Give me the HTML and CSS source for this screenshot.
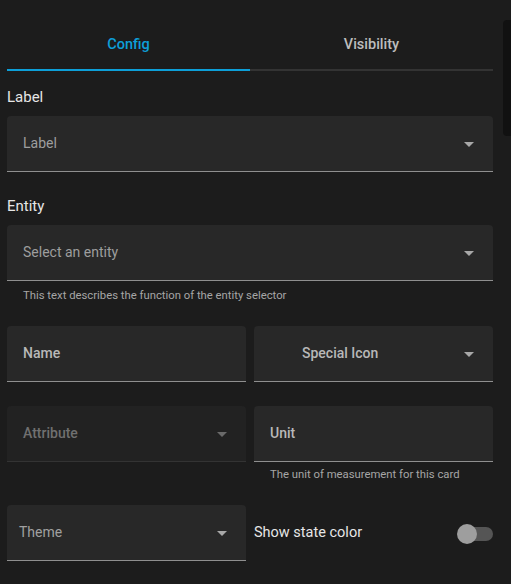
FILE: index.html
```html
<!DOCTYPE html>
<html>
<head>
<meta charset="utf-8">
<link rel="stylesheet" href="styles.css">
</head>
<body>
<div class="page">
  <div class="editor">
    <div class="tabs">
      <div class="tab active">Config</div>
      <div class="tab">Visibility</div>
    </div>

    <div class="section-title">Label</div>
    <div class="field">
      <span class="field-text">Label</span>
      <span class="arrow"></span>
    </div>

    <div class="section-title entity-title">Entity</div>
    <div class="field">
      <span class="field-text">Select an entity</span>
      <span class="arrow"></span>
    </div>
    <div class="helper">This text describes the function of the entity selector</div>

    <div class="grid">
      <div class="cell">
        <div class="field">
          <span class="field-text medium">Name</span>
        </div>
      </div>
      <div class="cell">
        <div class="field">
          <span class="field-text medium special">Special Icon</span>
          <span class="arrow"></span>
        </div>
      </div>
      <div class="cell">
        <div class="field disabled">
          <span class="field-text medium">Attribute</span>
          <span class="arrow"></span>
        </div>
      </div>
      <div class="cell">
        <div class="field">
          <span class="field-text medium">Unit</span>
        </div>
        <div class="helper helper-tight">The unit of measurement for this card</div>
      </div>
      <div class="cell last-row">
        <div class="field theme">
          <span class="field-text">Theme</span>
          <span class="arrow"></span>
        </div>
      </div>
      <div class="cell toggle-cell last-row">
        <span class="toggle-label">Show state color</span>
        <span class="switch"><span class="knob"></span></span>
      </div>
    </div>
  </div>
  <div class="scrollbar"><div class="thumb"></div></div>
</div>
</body>
</html>
```
FILE: styles.css
```css
* { box-sizing: border-box; }
html, body {
  margin: 0;
  padding: 0;
  background: #1c1c1c;
  font-family: Roboto, "Liberation Sans", sans-serif;
  color: #e1e1e1;
}
.page {
  display: flex;
  width: 511px;
  height: 584px;
  overflow: hidden;
}
.editor {
  width: 486px;
  margin-left: 7px;
  padding-top: 20px;
}
.scrollbar {
  margin-left: 10px;
  padding-top: 20px;
  width: 8px;
}
.thumb {
  width: 8px;
  height: 116px;
  background: #111111;
  border-radius: 4px 0 0 4px;
}
.tabs {
  display: flex;
  height: 51px;
  border-bottom: 2px solid #333333;
}
.tab {
  flex: 1;
  display: flex;
  align-items: center;
  justify-content: center;
  font-size: 14.5px;
  font-weight: 500;
  color: #bdbdbd;
  margin-bottom: -2px;
  border-bottom: 2px solid transparent;
}
.tab.active {
  color: #0d9fd8;
  border-bottom-color: #0d9fd8;
}
.section-title {
  font-size: 15px;
  height: 45px;
  display: flex;
  align-items: center;
  padding-top: 6px;
  color: #e6e6e6;
}
.entity-title {
  margin-top: 15px;
  height: 38px;
  padding-top: 0;
}
.field {
  height: 56px;
  background: #282828;
  border-radius: 4px 4px 0 0;
  border-bottom: 1px solid #8f8f8f;
  display: flex;
  align-items: center;
  padding: 0 16px 1px;
}
.field-text {
  flex: 1;
  font-size: 14px;
  color: #9e9e9e;
}
.field-text.medium {
  font-weight: 500;
  font-size: 14px;
  color: #b8b8b8;
}
.field-text.special {
  padding-left: 32px;
}
.field.disabled {
  background: #222222;
  border-bottom-color: #333333;
}
.field.disabled .field-text { color: #707070; }
.field.disabled .arrow { border-top-color: #6a6a6a; }
.field.theme { padding-left: 12px; }
.field.theme .field-text { font-weight: 400; color: #a0a0a0; }
.arrow {
  width: 0;
  height: 0;
  border-left: 5px solid transparent;
  border-right: 5px solid transparent;
  border-top: 5px solid #a8a8a8;
  margin-right: 3px;
  margin-top: 3px;
}
.helper {
  font-size: 11.3px;
  color: #a6a6a6;
  padding: 0 16px;
  height: 24px;
  display: flex;
  align-items: center;
  padding-top: 4px;
}
.helper-tight {
  padding-top: 0;
}
.grid {
  margin-top: 21px;
  display: grid;
  grid-template-columns: 1fr 1fr;
  column-gap: 8px;
  row-gap: 24px;
  align-items: start;
}
.grid .last-row { margin-top: -5px; }
.toggle-cell {
  height: 56px;
  display: flex;
  align-items: center;
  padding-bottom: 1px;
}
.toggle-label {
  flex: 1;
  font-size: 14.5px;
  color: #e6e6e6;
  padding-bottom: 1px;
}
.switch {
  position: relative;
  width: 32px;
  height: 14px;
  background: #555555;
  border-radius: 7px;
  margin-top: 2px;
}
.knob {
  position: absolute;
  left: -4px;
  top: -3px;
  width: 20px;
  height: 20px;
  border-radius: 50%;
  background: #9e9e9e;
}
```
